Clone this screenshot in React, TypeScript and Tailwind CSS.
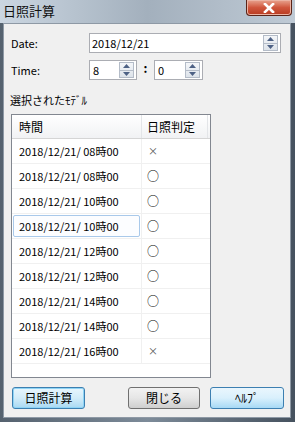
import React from "react";

const FONT = { fontFamily: '"Noto Sans CJK JP", "Noto Sans", sans-serif' };

type Row = { time: string; ok: boolean; focused?: boolean };

const rows: Row[] = [
  { time: "2018/12/21/ 08時00", ok: false },
  { time: "2018/12/21/ 08時00", ok: true },
  { time: "2018/12/21/ 10時00", ok: true },
  { time: "2018/12/21/ 10時00", ok: true, focused: true },
  { time: "2018/12/21/ 12時00", ok: true },
  { time: "2018/12/21/ 12時00", ok: true },
  { time: "2018/12/21/ 14時00", ok: true },
  { time: "2018/12/21/ 14時00", ok: true },
  { time: "2018/12/21/ 16時00", ok: false },
];

function Spinner() {
  return (
    <div className="flex h-[16px] w-[15px] flex-col border border-[#b4bcc8] bg-gradient-to-b from-[#f4f6f9] to-[#dde3ea]">
      <div className="flex flex-1 items-center justify-center border-b border-[#b4bcc8]">
        <svg width="7" height="4" viewBox="0 0 7 4">
          <path d="M0 4 L3.5 0 L7 4 Z" fill="#4d6185" />
        </svg>
      </div>
      <div className="flex flex-1 items-center justify-center">
        <svg width="7" height="4" viewBox="0 0 7 4">
          <path d="M0 0 L3.5 4 L7 0 Z" fill="#4d6185" />
        </svg>
      </div>
    </div>
  );
}

function NumBox({ value, className }: { value: string; className: string }) {
  return (
    <div
      className={`flex h-[20px] items-center justify-between border border-[#abadb3] bg-white pl-[3px] pr-[2px] ${className}`}
    >
      <span className="text-[11px] leading-none text-black">{value}</span>
      <Spinner />
    </div>
  );
}

function WinButton({
  label,
  variant,
  className,
}: {
  label: string;
  variant: "default" | "normal" | "hover";
  className: string;
}) {
  const look =
    variant === "normal"
      ? "border-[#707070] bg-gradient-to-b from-[#f2f2f2] via-[#e6e6e6] to-[#cfcfcf]"
      : variant === "default"
        ? "border-[#3c7fb1] bg-gradient-to-b from-[#e8f6fd] via-[#d2ecf9] to-[#a9d9f2] shadow-[inset_0_0_0_1px_#8fd4f5]"
        : "border-[#3c7fb1] bg-gradient-to-b from-[#eaf6fd] via-[#d9f0fc] to-[#a7d9f5]";
  return (
    <div
      className={`flex h-[22px] items-center justify-center rounded-[3px] border text-[12px] text-black ${look} ${className}`}
    >
      {label}
    </div>
  );
}

export default function App() {
  return (
    <div
      className="relative h-[422px] w-[295px] overflow-hidden bg-gradient-to-r from-[#55626f] via-[#7d8b99] to-[#46525f]"
      style={FONT}
    >
      {/* title bar */}
      <div className="flex h-[23px] items-start bg-gradient-to-r from-[#cbd6e1] via-[#a3b0bd] to-[#bfcad5]">
        <span className="ml-[3px] mt-[3px] text-[13px] leading-[15px] text-[#111]">日照計算</span>
        <div className="ml-auto mr-[3px] flex h-[16px] w-[46px] items-center justify-center rounded-b-[4px] border border-t-0 border-[#5a2418] bg-gradient-to-b from-[#e7a38f] via-[#d0563d] to-[#b73a1f] shadow-[inset_0_0_0_1px_#ecb3a3]">
          <svg width="12" height="10" viewBox="0 0 12 10">
            <path d="M2 1 L10 9 M10 1 L2 9" stroke="#ffffff" strokeWidth="2.6" strokeLinecap="square" />
          </svg>
        </div>
      </div>

      {/* client area */}
      <div className="ml-[3px] h-[395px] w-[288px] border border-[#8e99a5] bg-[#f0f0f0] text-black">
        {/* Date */}
        <div className="mt-[9px] flex h-[20px] items-center pl-[7px]">
          <span className="w-[78px] text-[11px]">Date:</span>
          <div className="flex h-[20px] w-[192px] items-center justify-between border border-[#abadb3] bg-white pl-[2px] pr-[2px]">
            <span className="text-[11px] leading-none">2018/12/21</span>
            <Spinner />
          </div>
        </div>

        {/* Time */}
        <div className="mt-[7px] flex h-[20px] items-center pl-[7px]">
          <span className="w-[78px] text-[11px]">Time:</span>
          <NumBox value="8" className="w-[48px]" />
          <span className="flex w-[17px] justify-center pb-[4px] text-[12px] font-bold leading-none">:</span>
          <NumBox value="0" className="w-[49px]" />
        </div>

        <div className="mt-[13px] pl-[6px] text-[11px] leading-[14px]">選択されたﾓﾃﾞﾙ</div>

        {/* table */}
        <div className="ml-[7px] mt-[7px] h-[264px] w-[200px] border border-[#828790] bg-white">
          <div className="flex h-[24px] border-b border-[#d5d5d5] bg-gradient-to-b from-white to-[#f1f2f4]">
            <div className="flex w-[130px] items-center border-r border-[#e3e5e8] pl-[7px] text-[12px]">時間</div>
            <div className="flex w-[66px] items-center border-r border-[#e3e5e8] pl-[5px] text-[12px]">日照判定</div>
          </div>
          {rows.map((r, i) => (
            <div key={i} className="flex h-[25px] border-b border-[#f0f0f0]">
              <div className="flex w-[130px] border-r border-[#f0f0f0] p-[1px]">
                <div
                  className={`flex flex-1 items-center rounded-[2px] border pl-[5px] text-[11px] ${
                    r.focused ? "border-[#a9c9ea] bg-[#fcfdff]" : "border-transparent"
                  }`}
                >
                  {r.time}
                </div>
              </div>
              <div className="flex w-[66px] items-center pl-[5px]">
                {r.ok ? (
                  <span className="text-[12px] leading-none">○</span>
                ) : (
                  <span className="pl-[1px] text-[10px] leading-none text-[#555]">×</span>
                )}
              </div>
            </div>
          ))}
        </div>

        {/* buttons */}
        <div className="mt-[9px] flex pl-[8px]">
          <WinButton label="日照計算" variant="default" className="w-[73px]" />
          <WinButton label="閉じる" variant="normal" className="ml-[43px] w-[72px]" />
          <WinButton label="ﾍﾙﾌﾟ" variant="hover" className="ml-[10px] w-[74px]" />
        </div>
      </div>
    </div>
  );
}
